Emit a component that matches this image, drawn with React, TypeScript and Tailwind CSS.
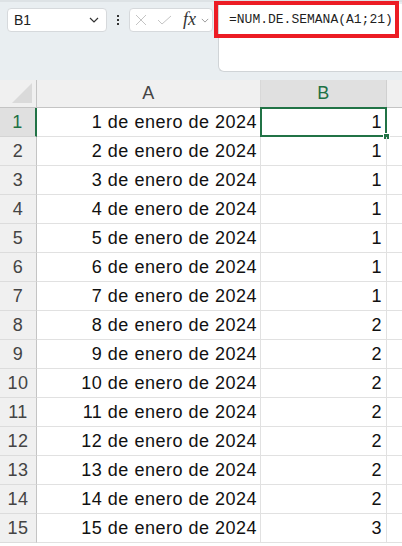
import React from 'react';

const rows = [1, 1, 1, 1, 1, 1, 1, 2, 2, 2, 2, 2, 2, 2, 3];

function Chevron({ className }: { className: string }) {
  return (
    <svg viewBox="0 0 10 6" className={className} fill="none" stroke="currentColor" strokeWidth="1.2">
      <path d="M1 1l4 4 4-4" />
    </svg>
  );
}

export default function App() {
  return (
    <div className="w-[402px] h-[546px] overflow-hidden bg-white font-['Liberation_Sans',Arial,sans-serif]">
      {/* toolbar / formula bar */}
      <div className="h-20 bg-[#e9eef1] flex items-start pt-2 pl-[7px] border-t-2 border-[#dde2e5]">
        <div className="w-[100px] h-6 bg-white border border-[#d6d9dc] rounded flex items-center justify-between pl-[6px] pr-[7px] -mt-[2px]">
          <span className="text-[14px] text-[#202020]">B1</span>
          <Chevron className="w-[10px] h-[6px] text-[#333]" />
        </div>
        <div className="w-[22px] h-6 flex flex-col items-center justify-center gap-[2px] -mt-[2px]">
          <span className="w-[2px] h-[2px] bg-[#333]" />
          <span className="w-[2px] h-[2px] bg-[#333]" />
          <span className="w-[2px] h-[2px] bg-[#333]" />
        </div>
        <div className="w-[84px] h-6 bg-white border border-[#d6d9dc] rounded flex items-center pl-[5px] -mt-[2px]">
          <svg viewBox="0 0 12 12" className="w-3 h-3" fill="none" stroke="#c4c4c4" strokeWidth="1">
            <path d="M1 1l10 10M11 1L1 11" />
          </svg>
          <svg viewBox="0 0 15 10" className="w-[15px] h-[10px] ml-[10px]" fill="none" stroke="#c4c4c4" strokeWidth="1">
            <path d="M1 5l4 4 9-8" />
          </svg>
          <span className="italic text-[18px] leading-none text-[#333] font-['Liberation_Serif',serif] ml-[11px] -mt-[2px]">fx</span>
          <Chevron className="w-[8px] h-[5px] text-[#999] ml-[5px]" />
        </div>
        <div className="relative flex-1 ml-[5px] -mt-[6px] h-[68px] bg-white rounded-bl-md border-b border-l border-[#d0d4d7]">
          <div className="pl-[10px] pt-[8px] text-[13px] leading-4 text-[#1f1f1f] font-['Liberation_Mono',monospace]">
            =NUM.DE.SEMANA(A1;21)
          </div>
          <div className="absolute -left-[5px] -top-[3px] right-[3px] h-[37px] border-[4px] border-[#ec1c24]" />
        </div>
      </div>

      {/* sheet */}
      <div className="grid grid-cols-[37px_224px_126px_1fr] text-[18px] tracking-[0.5px]">
        <div className="h-[28px] bg-[#f0f0f0] border-b border-r border-[#c4c4c4] flex items-end justify-end pr-1 pb-1">
          <svg viewBox="0 0 20 20" className="w-5 h-5">
            <path d="M20 0L20 20L0 20Z" fill="#dadada" />
          </svg>
        </div>
        <div className="h-[28px] bg-[#f0f0f0] border-b border-r border-[#c4c4c4] border-r-[#d8d8d8] flex items-center justify-center text-[#444]">A</div>
        <div className="h-[28px] bg-[#e0e0e0] border-b border-r border-[#c4c4c4] border-r-[#d0d0d0] flex items-center justify-center text-[#1e7145]">B</div>
        <div className="h-[28px] bg-[#f0f0f0] border-b border-[#c4c4c4]" />

        {rows.map((v, i) => {
          const sel = i === 0;
          return (
            <React.Fragment key={i}>
              <div
                className={`h-[29px] flex items-center justify-center border-b ${
                  sel
                    ? 'bg-[#e0e0e0] text-[#1e7145] border-b-[#d4d4d4] border-r-2 border-r-[#217346]'
                    : 'bg-[#f0f0f0] text-[#444] border-b-[#dcdcdc] border-r border-r-[#c4c4c4]'
                }`}
              >
                {i + 1}
              </div>
              <div className="h-[29px] flex items-center justify-end pr-[3px] border-b border-r border-[#e1e1e1] text-[#111]">
                {i + 1} de enero de 2024
              </div>
              <div className="relative h-[29px] flex items-center justify-end pr-[4px] border-b border-r border-[#e1e1e1] text-[#111]">
                {v}
                {sel && (
                  <>
                    <div className="absolute -left-px -top-px -right-px -bottom-px border-2 border-[#217346]" />
                    <div className="absolute -right-[4px] -bottom-[4px] w-[7px] h-[7px] bg-[#217346] border border-white" />
                  </>
                )}
              </div>
              <div className="h-[29px] border-b border-[#e1e1e1]" />
            </React.Fragment>
          );
        })}
      </div>
    </div>
  );
}
